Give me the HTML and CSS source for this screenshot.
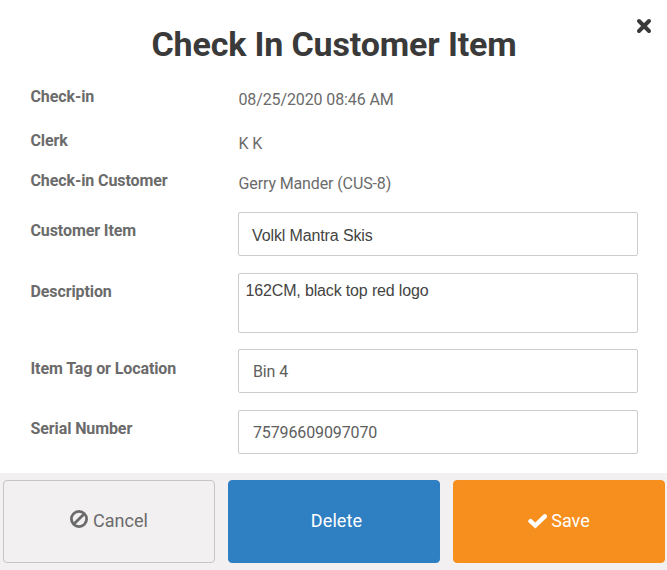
FILE: index.html
```html
<!DOCTYPE html>
<html lang="en">
<head>
<meta charset="utf-8">
<title>Check In Customer Item</title>
<link rel="stylesheet" href="styles.css">
</head>
<body>
<main class="modal">
  <button class="close" aria-label="Close"><svg viewBox="0 0 16 16"><path d="M3 3 13 13M13 3 3 13"/></svg></button>
  <h1 class="title">Check In Customer Item</h1>
  <div class="form">
    <div class="row checkin"><div class="label">Check-in</div><div class="text">08/25/2020 08:46 AM</div></div>
    <div class="row clerk"><div class="label">Clerk</div><div class="text">K K</div></div>
    <div class="row customer"><div class="label">Check-in Customer</div><div class="text">Gerry Mander (CUS-8)</div></div>
    <div class="row item"><div class="label">Customer Item</div><div class="field arial">Volkl Mantra Skis</div></div>
    <div class="row description"><div class="label">Description</div><div class="field area arial">162CM, black top red logo</div></div>
    <div class="row tag"><div class="label">Item Tag or Location</div><div class="field">Bin 4</div></div>
    <div class="row serial"><div class="label">Serial Number</div><div class="field">75796609097070</div></div>
  </div>
  <footer class="actions">
    <button class="btn cancel"><svg class="ban" viewBox="0 0 18 18"><circle cx="9" cy="9" r="7.6"/><path d="M14.3 3.7 3.7 14.3"/></svg><span>Cancel</span></button>
    <button class="btn delete"><span>Delete</span></button>
    <button class="btn save"><svg class="check" viewBox="0 0 19 16"><path d="M2.5 8.2 7.3 12.6 16.8 3.4"/></svg><span>Save</span></button>
  </footer>
</main>
</body>
</html>
```
FILE: styles.css
```css
* { box-sizing: border-box; }
body { margin: 0; background: #fff; font-family: Roboto, sans-serif; font-size: 16px; color: #6b6b6b; }
.modal { position: relative; width: 667px; height: 570px; overflow: hidden; display: flex; flex-direction: column; }
.close { position: absolute; left: 636px; top: 18px; width: 16px; height: 16px; padding: 0; border: 0; background: none; }
.close svg { display: block; width: 16px; height: 16px; fill: none; stroke: #3a3a3a; stroke-width: 4; stroke-linecap: round; }
.title { margin: 0; padding: 24px 0 0 1px; height: 77px; text-align: center; font-size: 34px; line-height: 40px; font-weight: 700; letter-spacing: -0.15px; color: #3a3a3a; }
.form { height: 396px; padding: 0 29px 0 30px; }
.row { display: grid; grid-template-columns: 208px 400px; align-items: start; line-height: 20px; }
.label { font-weight: 700; padding: 10px 0 0 0.5px; letter-spacing: -0.1px; }
.text { padding: 13px 0 0 0.5px; letter-spacing: -0.12px; }
.checkin { height: 44px; }
.clerk { height: 43px; }
.customer { height: 48px; }
.customer .label { padding-top: 7px; }
.customer .text { padding-top: 10px; }
.field { height: 44px; border: 1px solid #ccc; border-radius: 2px; padding: 12px 14px; color: #5e5e5e; white-space: nowrap; letter-spacing: -0.12px; }
.arial { font-family: "Liberation Sans", Arial, sans-serif; color: #444; }
.item { height: 61px; }
.item .label, .description .label { padding-top: 9px; }
.item .field { padding: 13px; }
.description { height: 76px; }
.description .area { height: 60px; padding: 7px 6.5px; letter-spacing: -0.15px; }
.tag { height: 61px; }
.serial .label { padding-top: 9px; }
.actions { height: 97px; padding: 7px 2px 7px 3px; background: #f2f0f1; display: grid; grid-template-columns: repeat(3, 212px); gap: 13px; }
.btn { display: flex; align-items: center; justify-content: center; gap: 4px; height: 83px; padding: 0 0 2px; border: 1px solid; border-radius: 4px; font: 18px/24px Roboto, sans-serif; color: #fff; }
.cancel { gap: 5px; color: #6b6b6b; background: #f2f0f1; border-color: #c6c4c5; }
.delete { background: #2f80c3; border-color: #2f80c3; padding-left: 5px; letter-spacing: 0.1px; }
.save { background: #f78f1e; border-color: #f78f1e; }
.btn svg { fill: none; stroke: currentColor; }
.ban { width: 18px; height: 18px; margin-bottom: 3px; stroke-width: 2.8; }
.check { width: 19px; height: 16px; stroke-width: 4.4; stroke-linecap: round; }
```
